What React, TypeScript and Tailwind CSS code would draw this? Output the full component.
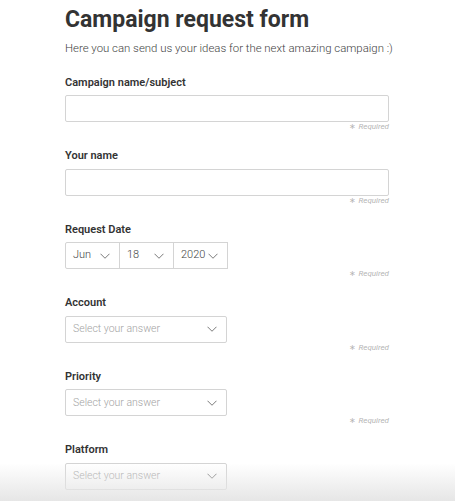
import React from 'react';

const Chevron = () => (
  <svg width="10" height="6" viewBox="0 0 10 6" fill="none" className="shrink-0">
    <path d="M0.5 0.75L5 5.25L9.5 0.75" stroke="#6b6b6b" strokeWidth="0.9" />
  </svg>
);

const Required = () => (
  <div className="h-[10px] flex items-center justify-end text-[8px] italic text-[#b5b5b5] leading-none">
    <span className="mr-[2px] not-italic">∗</span>Required
  </div>
);

const Label = ({ children }: { children: React.ReactNode }) => (
  <div className="h-[14px] mb-[6px] flex items-center text-[11px] font-semibold text-[#333] leading-none">
    {children}
  </div>
);

const TextField = ({ label }: { label: string }) => (
  <div className="mb-[16.5px]">
    <Label>{label}</Label>
    <div className="h-[27px] w-full border border-[#d4d4d4] rounded-[2px] bg-white" />
    <Required />
  </div>
);

const SelectField = ({ label, last }: { label: string; last?: boolean }) => (
  <div className="mb-[16.5px]">
    <Label>{label}</Label>
    <div className="h-[27px] w-[162px] border border-[#d4d4d4] rounded-[2px] bg-white flex items-center justify-between pl-[7px] pr-[9px]">
      <span className="text-[10.5px] font-light text-[#a3a3a3]">Select your answer</span>
      <Chevron />
    </div>
    {!last && <Required />}
  </div>
);

const DatePart = ({ value, first }: { value: string; first?: boolean }) => (
  <div
    className={
      'h-[27px] w-[55px] border border-[#d4d4d4] flex items-center justify-between pl-[7px] pr-[9px] bg-white ' +
      (first ? 'rounded-l-[2px]' : '-ml-px')
    }
  >
    <span className="text-[11px] font-light text-[#444]">{value}</span>
    <Chevron />
  </div>
);

export default function App() {
  return (
    <div className="relative w-full h-[501px] overflow-hidden bg-white" style={{ fontFamily: 'Roboto, "Noto Sans", sans-serif' }}>
      <div className="pl-[65px] w-[389px] pt-[6px]">
        <h1 className="text-[23px] font-bold text-[#333] leading-[28px]">Campaign request form</h1>
        <p className="mt-[7px] text-[11.4px] font-light text-[#3f3f3f] leading-[14px] whitespace-nowrap">
          Here you can send us your ideas for the next amazing campaign :)
        </p>

        <div className="mt-[20px]">
          <TextField label="Campaign name/subject" />
          <TextField label="Your name" />

          <div className="mb-[16.5px]">
            <Label>Request Date</Label>
            <div className="flex">
              <DatePart value="Jun" first />
              <DatePart value="18" />
              <DatePart value="2020" />
            </div>
            <Required />
          </div>

          <SelectField label="Account" />
          <SelectField label="Priority" />
          <SelectField label="Platform" last />
        </div>
      </div>

      {/* bottom fade */}
      <div className="absolute left-0 right-0 bottom-0 h-[38px] bg-gradient-to-b from-white/0 to-[#e6e6e6] pointer-events-none" />
    </div>
  );
}
